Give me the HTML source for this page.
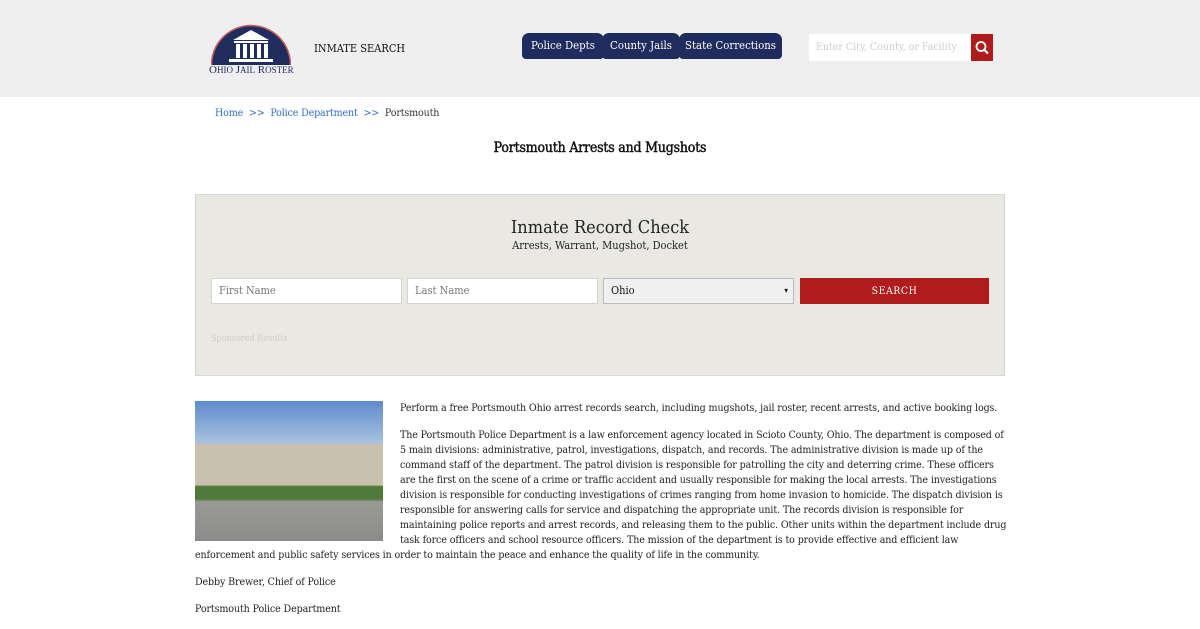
<!DOCTYPE html>
<html><head><meta charset="utf-8"><style>
*{box-sizing:border-box;margin:0;padding:0}
body{width:1200px;height:620px;overflow:hidden;background:#fff;font-family:"DejaVu Serif Condensed","DejaVu Serif","Liberation Serif",serif;font-stretch:condensed;color:#222;font-size:11px}
.hdr{height:97px;background:#efefef;position:relative}
.logo{position:absolute;left:211px;top:21px}
.lt{position:absolute;left:209px;top:64px;color:#1d2a5a;font-family:"Liberation Serif",serif;font-size:11px;white-space:nowrap}
.is{position:absolute;left:314px;top:42px;font-size:11px;color:#111}
.tab{position:absolute;top:33px;height:26px;background:#1f2d5e;color:#fff;font-size:11.3px;line-height:26px;text-align:center;border-radius:7px 7px 4px 4px;white-space:nowrap}
.sb{position:absolute;left:809px;top:34px;width:162px;height:27px;background:#fff;color:#ccc;font-size:10.5px;line-height:27px;padding-left:7px;white-space:nowrap;overflow:hidden}
.sbb{position:absolute;left:971px;top:34px;width:22px;height:27px;background:#b01c1c}
.bc{position:absolute;left:215px;top:107px;font-size:10.6px;color:#333;letter-spacing:-.15px}
.bc a{color:#2e6fc9;text-decoration:none}
h1{position:absolute;top:140px;left:0;width:1200px;text-align:center;font-size:14px;font-weight:normal;color:#111;-webkit-text-stroke:.45px #111;letter-spacing:-.2px}
.box{position:absolute;left:195px;top:194px;width:810px;height:182px;background:#e9e8e3;border:1px solid #d8d7d2}
.box h2{position:absolute;top:22px;width:100%;text-align:center;font-weight:normal;font-size:18px;color:#222}
.box .s{position:absolute;top:44px;width:100%;text-align:center;font-size:11px}
.in{position:absolute;top:83px;height:26px;background:#fff;border:1px solid #d4d4d0;color:#777;font-size:11px;line-height:24px;padding-left:7px}
.btn{position:absolute;left:604px;top:83px;width:189px;height:26px;background:#b01c1c;color:#fff;text-align:center;line-height:26px;font-size:10.5px;letter-spacing:.5px}
.sp{position:absolute;left:15px;top:139px;font-size:9px;color:#cfcdc8}
.img{position:absolute;left:195px;top:401px;width:188px;height:140px;background:linear-gradient(#5d8ccc 0,#a9c2e0 30%,#c9c0ad 31%,#c9c0ad 60%,#4f7a3a 61%,#4f7a3a 70%,#9a9a98 72%,#8b8b8a 100%)}
.txt{position:absolute;left:195px;top:401px;width:812px;font-size:10.6px;line-height:15px;color:#222;letter-spacing:-.12px}
.txt p{margin-bottom:12px}
.fl{float:left;width:205px;height:142px}
</style></head><body>
<div class="hdr">
<svg class="logo" viewBox="0 0 80 44" width="80" height="44"><path d="M1 44A39 39 0 0 1 79 44Z" fill="#1f2d5e"/><path d="M0.5 44A39.5 39.5 0 0 1 79.5 44" fill="none" stroke="#c85a5a" stroke-width="1.5"/><path d="M22 19L40 9 58 19Z" fill="#fff"/><rect x="23" y="20" width="34" height="2" fill="#fff"/><g fill="#fff"><rect x="25" y="23" width="4" height="14"/><rect x="32" y="23" width="4" height="14"/><rect x="39" y="23" width="4" height="14"/><rect x="46" y="23" width="4" height="14"/><rect x="53" y="23" width="4" height="14"/></g><rect x="18" y="38" width="44" height="3" fill="#fff"/></svg>
<div class="lt">O<span style="font-size:9px">HIO</span> J<span style="font-size:9px">AIL</span> R<span style="font-size:9px">OSTER</span></div>
<div class="is">INMATE SEARCH</div>
<div class="tab" style="left:522px;width:82px">Police Depts</div>
<div class="tab" style="left:602px;width:78px">County Jails</div>
<div class="tab" style="left:679px;width:103px">State Corrections</div>
<div class="sb">Enter City, County, or Facility</div>
<div class="sbb"><svg width="22" height="27" viewBox="0 0 22 27"><circle cx="10" cy="12.5" r="4.5" fill="none" stroke="#fff" stroke-width="1.8"/><path d="M13.2 15.7L17 19.5" stroke="#fff" stroke-width="2.2"/></svg></div>
</div>
<div class="bc"><a>Home</a> &nbsp;<a>&gt;&gt;</a>&nbsp; <a>Police Department</a> &nbsp;<a>&gt;&gt;</a>&nbsp; Portsmouth</div>
<h1>Portsmouth Arrests and Mugshots</h1>
<div class="box">
<h2>Inmate Record Check</h2>
<div class="s">Arrests, Warrant, Mugshot, Docket</div>
<div class="in" style="left:15px;width:191px">First Name</div>
<div class="in" style="left:211px;width:191px">Last Name</div>
<div class="in" style="left:407px;width:191px;background:#f0f0f0;color:#111;border-color:#bbb">Ohio<span style="position:absolute;right:5px;font-size:8px">&#9662;</span></div>
<div class="btn">SEARCH</div>
<div class="sp">Sponsored Results</div>
</div>
<div class="img"></div>
<div class="txt"><div class="fl"></div>
<p>Perform a free Portsmouth Ohio arrest records search, including mugshots, jail roster, recent arrests, and active booking logs.</p>
<p>The Portsmouth Police Department is a law enforcement agency located in Scioto County, Ohio. The department is composed of 5 main divisions: administrative, patrol, investigations, dispatch, and records. The administrative division is made up of the command staff of the department. The patrol division is responsible for patrolling the city and deterring crime. These officers are the first on the scene of a crime or traffic accident and usually responsible for making the local arrests. The investigations division is responsible for conducting investigations of crimes ranging from home invasion to homicide. The dispatch division is responsible for answering calls for service and dispatching the appropriate unit. The records division is responsible for maintaining police reports and arrest records, and releasing them to the public. Other units within the department include drug task force officers and school resource officers. The mission of the department is to provide effective and efficient law enforcement and public safety services in order to maintain the peace and enhance the quality of life in the community.</p>
<p>Debby Brewer, Chief of Police</p>
<p>Portsmouth Police Department</p>
</div>
</body></html>
